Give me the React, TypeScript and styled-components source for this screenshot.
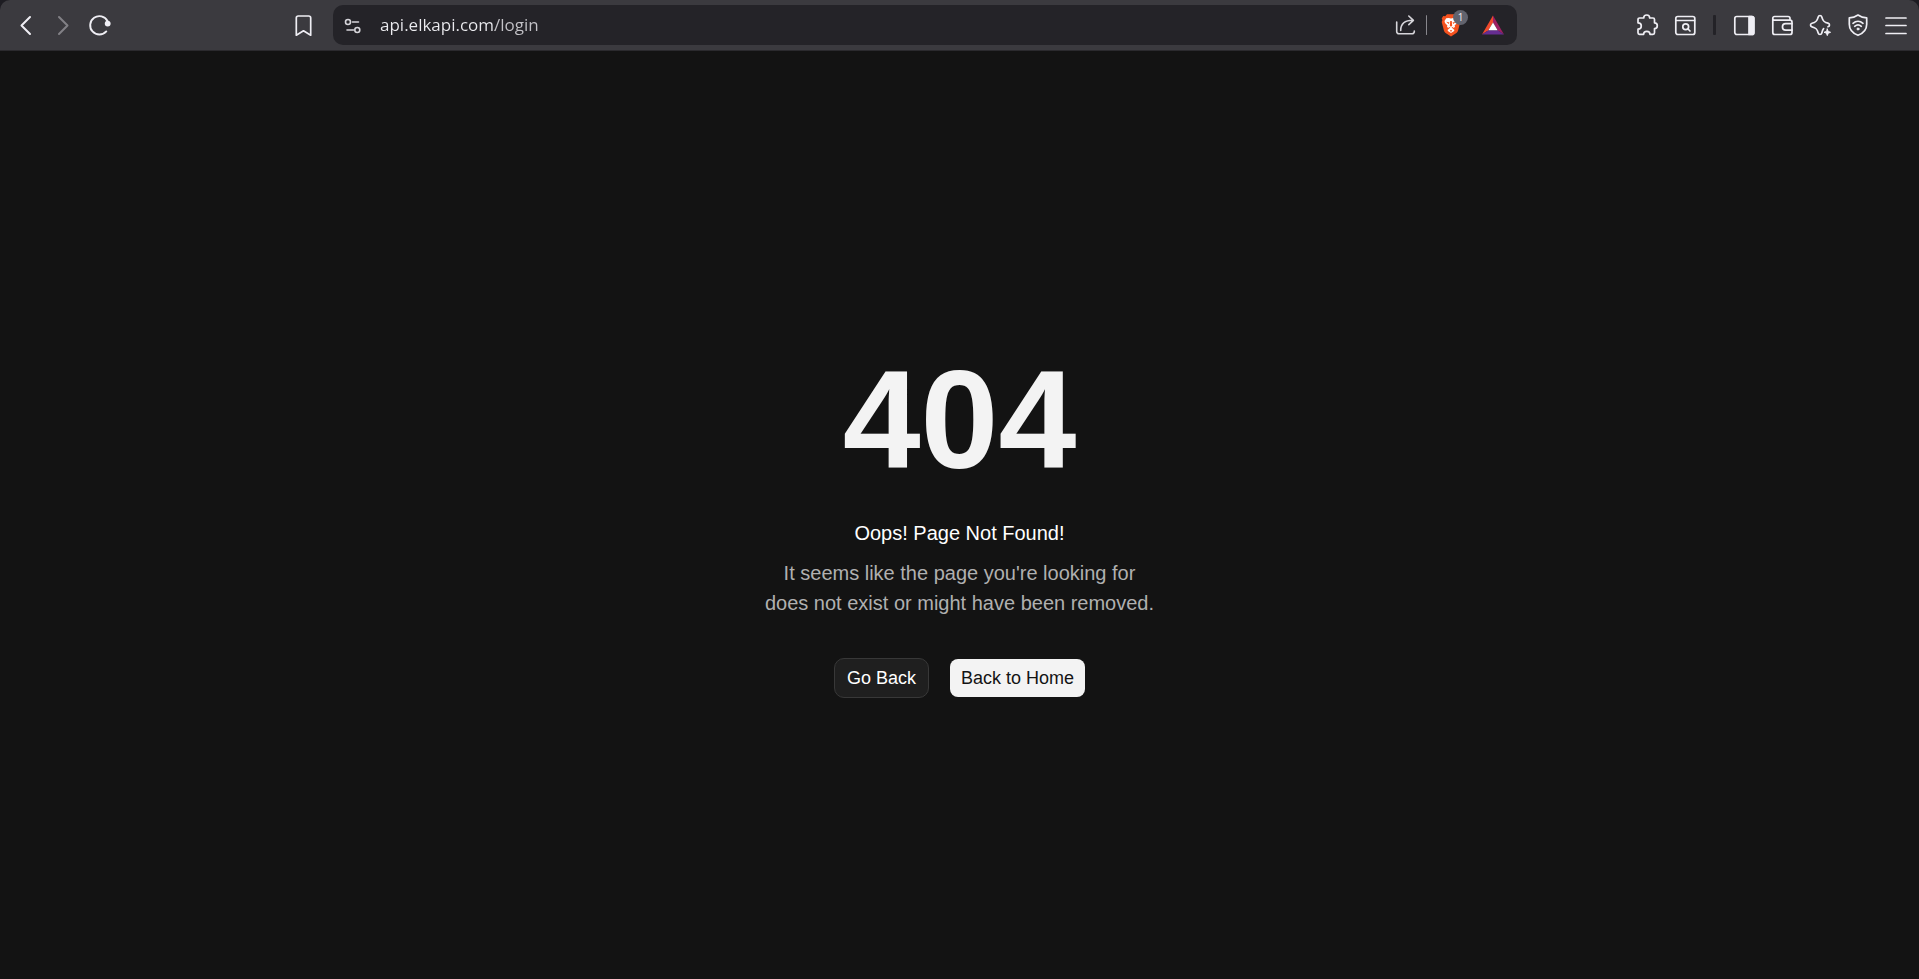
import React from "react";
import styled, { createGlobalStyle } from "styled-components";

const GlobalStyle = createGlobalStyle`
  *, *::before, *::after { box-sizing: border-box; }
  body {
    margin: 0;
    background: #131313;
    font-family: "Liberation Sans", Arial, sans-serif;
  }
`;

const Window = styled.div`
  display: flex;
  flex-direction: column;
  min-height: 100vh;
  background: #131313;
`;

const Frame = styled.div`
  background: #1d1c22;
`;

const Toolbar = styled.header`
  display: flex;
  align-items: center;
  height: 51px;
  padding: 0 6px 0 9px;
  background: #3b3a3f;
  border-bottom: 1px solid #2b2a2e;
  border-radius: 10px 10px 0 0;
`;

const NavGroup = styled.nav`
  display: flex;
  align-items: center;
  gap: 3px;
  width: 324px;
  flex: none;
`;

const ToolGroup = styled.div`
  display: flex;
  align-items: center;
  justify-content: flex-end;
  gap: 4px;
  width: 396px;
  flex: none;
`;

const IconButton = styled.button<{ $muted?: boolean; $push?: boolean }>`
  display: grid;
  place-items: center;
  flex: none;
  width: 34px;
  height: 34px;
  margin: 0 ${(p) => (p.$push ? "13px" : "0")} 0 ${(p) => (p.$push ? "auto" : "0")};
  padding: 0;
  border: 0;
  background: transparent;
  color: ${(p) => (p.$muted ? "#828186" : "#efeef4")};
`;

const AddressBar = styled.form`
  display: flex;
  align-items: center;
  flex: 1;
  min-width: 0;
  height: 40px;
  padding: 0 7px 0 3px;
  border-radius: 10px;
  background: #242328;

  ${IconButton} {
    color: #d6d5da;
  }
`;

const AddressInput = styled.input`
  flex: 1;
  min-width: 0;
  height: 24px;
  margin-left: 10px;
  padding: 0;
  border: 0;
  outline: 0;
  background: linear-gradient(90deg, #ececf0 115px, #c4c3c8 115px);
  background-clip: text;
  -webkit-background-clip: text;
  color: transparent;
  font: 17px/24px "Open Sans", "Noto Sans", sans-serif;
`;

const Divider = styled.span<{ $dark?: boolean }>`
  flex: none;
  width: ${(p) => (p.$dark ? "3px" : "1px")};
  height: 20px;
  margin: 0 ${(p) => (p.$dark ? "7px" : "4px")};
  border-radius: 1px;
  background: ${(p) => (p.$dark ? "#232227" : "#88878d")};
`;

const ShieldsButton = styled(IconButton)`
  position: relative;
  margin-right: 8px;
  margin-left: 3px;
`;

const Badge = styled.span`
  position: absolute;
  top: 2px;
  right: 0;
  width: 15px;
  height: 15px;
  border-radius: 50%;
  background: #62636e;
  color: #f2f2f6;
  font: 10px/15px "Open Sans", sans-serif;
  text-align: center;
`;

const Main = styled.main`
  display: flex;
  flex: 1;
  flex-direction: column;
  align-items: center;
  justify-content: center;
  text-align: center;
`;

const Code = styled.h1`
  margin: 0 0 10px;
  color: #f3f3f3;
  font-size: 140px;
  font-weight: 700;
  line-height: 176px;
`;

const Title = styled.h2`
  margin: 0 0 10px;
  color: #fff;
  font-size: 20px;
  font-weight: 400;
  line-height: 30px;
`;

const Message = styled.p`
  margin: 0 0 40px;
  color: #b0b0b0;
  font-size: 20px;
  line-height: 30px;
`;

const Actions = styled.div`
  display: flex;
  align-items: center;
  gap: 21px;
`;

const ActionButton = styled.button<{ $primary?: boolean }>`
  height: ${(p) => (p.$primary ? "38px" : "40px")};
  padding: 0 ${(p) => (p.$primary ? "11px" : "12px")};
  border: ${(p) => (p.$primary ? "0" : "1px solid #383838")};
  border-radius: ${(p) => (p.$primary ? "8px" : "10px")};
  background: ${(p) => (p.$primary ? "#f3f3f3" : "#1f1f1f")};
  color: ${(p) => (p.$primary ? "#131313" : "#fff")};
  font: 18px/24px "Liberation Sans", Arial, sans-serif;
`;

const Glyph = ({ children, width = 2 }: { children: React.ReactNode; width?: number }) => (
  <svg
    width="24"
    height="24"
    viewBox="0 0 24 24"
    fill="none"
    stroke="currentColor"
    strokeWidth={width}
    strokeLinecap="round"
    strokeLinejoin="round"
    aria-hidden="true"
  >
    {children}
  </svg>
);

const BackIcon = () => (
  <Glyph><path d="M16 4 7.5 12.5 16 21" /></Glyph>
);

const ForwardIcon = () => (
  <Glyph><path d="M8 4 16.5 12.5 8 21" /></Glyph>
);

const ReloadIcon = () => (
  <Glyph width={1.9}>
    <path d="M18.3 18.4A9.2 9.2 0 1 1 19.5 8" />
    <circle cx="19.7" cy="10.6" r="2" fill="currentColor" />
  </Glyph>
);

const BookmarkIcon = () => (
  <Glyph width={1.7}>
    <path d="M5.3 22.2V5a2 2 0 0 1 2-2h10.4a2 2 0 0 1 2 2v17.2l-7.2-4.4z" />
  </Glyph>
);

const SiteSettingsIcon = () => (
  <Glyph width={1.6}>
    <circle cx="7" cy="9" r="2.5" />
    <path d="M11.5 9h6M6 17h6.5" />
    <circle cx="16.3" cy="17" r="2.5" />
  </Glyph>
);

const ShareIcon = () => (
  <Glyph width={1.6}>
    <path d="M3.7 9v9.6a2.2 2.2 0 0 0 2.2 2.2h13.2a2.2 2.2 0 0 0 2.2-2.2V18" />
    <path d="M7.7 17.4C7.7 11 11.5 7.3 20 7.3M15.8 3l4.6 4.3-4.6 4.3" />
  </Glyph>
);

const LionIcon = () => (
  <svg width="20" height="24" viewBox="0 0 20 24" aria-hidden="true">
    <path
      fill="#f4511e"
      d="M6 1.2h8l1.8 2 2-.2 1.5 2.4-.7 1.6.7 2-2.3 8.700c-.3 1-.8 1.700-1.600 2.300L10 23.500 4.600 20C3.800 19.400 3.300 18.700 3 17.700L.7 9l.7-2L.7 5.400 2.200 3l2 .2z"
    />
    <path
      fill="#fff"
      d="m10 5.6 2.300-.5 2.500.1 1.700 2.900-.5 1.800-2.400 2.700.4 1.300-2.400 1.500 1.900 1.600-.7 1.200-2.800 1.900-2.800-1.900-.7-1.200 1.900-1.600L6 13.900l.4-1.300L4 9.900l-.5-1.800 1.700-2.900 2.500-.1z"
    />
    <path
      fill="#f4511e"
      d="m5.200 8.700 3.300.8-.8 1.400zM14.800 8.700l-3.300.8.8 1.400zM9.200 8h1.600l.4 4.800-1.200 1-1.200-1zM7.300 13.700l2.100.9-.9.800zM12.700 13.700l-2.100.9.900.8zM8.700 17.700l1.300-.8 1.300.8-1.300 1z"
    />
  </svg>
);

const RewardsIcon = () => (
  <svg width="24" height="24" viewBox="0 0 24 24" aria-hidden="true">
    <path fill="#f04a2c" d="M12 2.500V9.500L7.400 17.300 1 21.500z" />
    <path fill="#9e1f63" d="M12 2.500 23 21.500 16.600 17.300 12 9.500z" />
    <path fill="#662d91" d="M1 21.500 7.400 17.300H16.600L23 21.500z" />
    <path fill="#fff" d="M12 9.500 16.600 17.300H7.400z" />
  </svg>
);

const ExtensionsIcon = () => (
  <Glyph width={1.7}>
    <path d="M4.500 5H8.700C8.700 3.300 9.900 2 11.700 2S14.700 3.300 14.700 5H18a1.500 1.500 0 0 1 1.500 1.500V9.800C21.300 9.800 22.300 11 22.300 12.700S21.300 15.600 19.500 15.600V19.800A1.500 1.500 0 0 1 18 21.300H15C15 19.400 13.600 18.300 11.800 18.300S8.600 19.400 8.600 21.300H4.500A1.500 1.500 0 0 1 3 19.800V16.200C5.200 16.200 6.300 14.800 6.300 13S5.200 9.800 3 9.800V6.500A1.500 1.500 0 0 1 4.500 5z" />
  </Glyph>
);

const PageSearchIcon = () => (
  <Glyph width={1.7}>
    <rect x="2.8" y="3.5" width="19" height="18" rx="2" />
    <path d="M3 7.500h18.500M15 16l2 2" />
    <circle cx="12.7" cy="13.7" r="2.9" />
  </Glyph>
);

const SidebarIcon = () => (
  <Glyph width={1.7}>
    <rect x="2.8" y="3.5" width="19" height="18" rx="2" />
    <path fill="currentColor" d="M17 3.500h3a1.800 1.800 0 0 1 1.800 1.800v14.400a1.800 1.800 0 0 1-1.800 1.800h-3z" />
  </Glyph>
);

const WalletIcon = () => (
  <Glyph width={1.7}>
    <path d="M20 7V5.500a2 2 0 0 0-2-2H4.500a1.700 1.700 0 0 0-1.700 1.700V19.500a2 2 0 0 0 2 2H20a2 2 0 0 0 2-2V9.200a2 2 0 0 0-2-2H4.500a1.700 1.700 0 0 1-1.700-1.800" />
    <path d="M22 10.700h-6.300a3.200 3.200 0 0 0 0 6.500H22" />
  </Glyph>
);

const SparkleIcon = () => (
  <Glyph width={1.7}>
    <path d="M15.600 15.700C14.600 16.700 14.200 18.300 13.800 20c-.5 2-3.100 2-3.600 0-1-4-2.300-5.300-6.200-6.200-2-.5-2-3.100 0-3.600 3.900-.9 5.200-2.200 6.200-6.200.5-2 3.100-2 3.600 0 1 4 2.300 5.300 6.200 6.200 2 .5 2 3.100 0 3.600" />
    <path fill="currentColor" strokeWidth="1" d="m19.300 16 .9 2.400 2.400.9-2.400.9-.9 2.400-.9-2.400-2.400-.9 2.400-.9z" />
  </Glyph>
);

const VpnIcon = () => (
  <Glyph width={1.7}>
    <path d="M12 2c2.700 1.900 5.500 2.700 8.700 2.900v6.300c0 5.300-3.300 9-8.700 11.100-5.400-2.100-8.700-5.800-8.700-11.100V4.900C6.500 4.700 9.300 3.900 12 2z" />
    <path d="M7 10.300c3-2.600 7-2.600 10 0M8.700 13.300c2-1.700 4.600-1.700 6.600 0" />
    <circle cx="12" cy="16" r="1" fill="currentColor" strokeWidth="1" />
  </Glyph>
);

const MenuIcon = () => (
  <Glyph width={1.7}>
    <path d="M2 5h20M2 12.500h20M2 20.500h20" />
  </Glyph>
);

export default function App() {
  return (
    <Window>
      <GlobalStyle />
      <Frame>
        <Toolbar>
          <NavGroup aria-label="Browser navigation">
            <IconButton aria-label="Back"><BackIcon /></IconButton>
            <IconButton aria-label="Forward" $muted><ForwardIcon /></IconButton>
            <IconButton aria-label="Reload"><ReloadIcon /></IconButton>
            <IconButton aria-label="Bookmark this page" $push><BookmarkIcon /></IconButton>
          </NavGroup>
          <AddressBar onSubmit={(e) => e.preventDefault()}>
            <IconButton type="button" aria-label="Site settings"><SiteSettingsIcon /></IconButton>
            <AddressInput aria-label="Address" defaultValue="api.elkapi.com/login" spellCheck={false} />
            <IconButton type="button" aria-label="Share"><ShareIcon /></IconButton>
            <Divider />
            <ShieldsButton type="button" aria-label="Shields">
              <LionIcon />
              <Badge>1</Badge>
            </ShieldsButton>
            <IconButton type="button" aria-label="Rewards"><RewardsIcon /></IconButton>
          </AddressBar>
          <ToolGroup>
            <IconButton aria-label="Extensions"><ExtensionsIcon /></IconButton>
            <IconButton aria-label="Search page"><PageSearchIcon /></IconButton>
            <Divider $dark />
            <IconButton aria-label="Sidebar"><SidebarIcon /></IconButton>
            <IconButton aria-label="Wallet"><WalletIcon /></IconButton>
            <IconButton aria-label="Assistant"><SparkleIcon /></IconButton>
            <IconButton aria-label="VPN"><VpnIcon /></IconButton>
            <IconButton aria-label="Menu"><MenuIcon /></IconButton>
          </ToolGroup>
        </Toolbar>
      </Frame>
      <Main>
        <Code>404</Code>
        <Title>Oops! Page Not Found!</Title>
        <Message>
          It seems like the page you're looking for
          <br />
          does not exist or might have been removed.
        </Message>
        <Actions>
          <ActionButton>Go Back</ActionButton>
          <ActionButton $primary>Back to Home</ActionButton>
        </Actions>
      </Main>
    </Window>
  );
}
